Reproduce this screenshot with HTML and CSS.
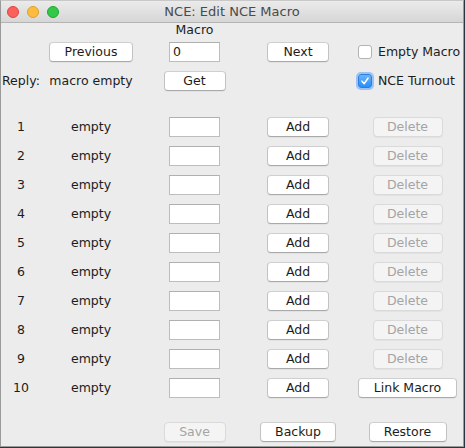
FILE: index.html
```html
<!DOCTYPE html>
<html>
<head>
<meta charset="utf-8">
<link rel="stylesheet" href="styles.css">
</head>
<body>
<div class="window">
  <div class="titlebar">
    <div class="lights">
      <span class="light red"></span>
      <span class="light yellow"></span>
      <span class="light green"></span>
    </div>
    <div class="title">NCE: Edit NCE Macro</div>
  </div>
  <div class="content">
    <div class="grid top">
      <div class="c3 r1 label">Macro</div>
      <button class="btn c2 r2 w-prev">Previous</button>
      <div class="c3 r2"><div class="field num">0</div></div>
      <button class="btn c4 r2 w-62">Next</button>
      <label class="check c5 r2"><span class="box"></span><span>Empty Macro</span></label>
      <div class="c1 r3 reply">Reply:</div>
      <div class="c2 r3">macro empty</div>
      <button class="btn c3 r3 w-62">Get</button>
      <label class="check c5 r3"><span class="box checked"><svg width="10" height="10" viewBox="0 0 10 10"><path d="M2 5.2 L4.2 7.6 L8 2.2" fill="none" stroke="#fff" stroke-width="1.6" stroke-linecap="round" stroke-linejoin="round"/></svg></span><span>NCE Turnout</span></label>
    </div>

    <div class="grid list">
      <div class="c1">1</div><div class="c2">empty</div><div class="c3"><div class="field"></div></div><button class="btn c4 w-62">Add</button><button class="btn c5 w-del" disabled>Delete</button>
      <div class="c1">2</div><div class="c2">empty</div><div class="c3"><div class="field"></div></div><button class="btn c4 w-62">Add</button><button class="btn c5 w-del" disabled>Delete</button>
      <div class="c1">3</div><div class="c2">empty</div><div class="c3"><div class="field"></div></div><button class="btn c4 w-62">Add</button><button class="btn c5 w-del" disabled>Delete</button>
      <div class="c1">4</div><div class="c2">empty</div><div class="c3"><div class="field"></div></div><button class="btn c4 w-62">Add</button><button class="btn c5 w-del" disabled>Delete</button>
      <div class="c1">5</div><div class="c2">empty</div><div class="c3"><div class="field"></div></div><button class="btn c4 w-62">Add</button><button class="btn c5 w-del" disabled>Delete</button>
      <div class="c1">6</div><div class="c2">empty</div><div class="c3"><div class="field"></div></div><button class="btn c4 w-62">Add</button><button class="btn c5 w-del" disabled>Delete</button>
      <div class="c1">7</div><div class="c2">empty</div><div class="c3"><div class="field"></div></div><button class="btn c4 w-62">Add</button><button class="btn c5 w-del" disabled>Delete</button>
      <div class="c1">8</div><div class="c2">empty</div><div class="c3"><div class="field"></div></div><button class="btn c4 w-62">Add</button><button class="btn c5 w-del" disabled>Delete</button>
      <div class="c1">9</div><div class="c2">empty</div><div class="c3"><div class="field"></div></div><button class="btn c4 w-62">Add</button><button class="btn c5 w-del" disabled>Delete</button>
      <div class="c1">10</div><div class="c2">empty</div><div class="c3"><div class="field"></div></div><button class="btn c4 w-62">Add</button><button class="btn c5 w-link">Link Macro</button>
    </div>

    <div class="grid bottom">
      <button class="btn c3 w-62" disabled>Save</button>
      <button class="btn c4 w-backup">Backup</button>
      <button class="btn c5 w-restore">Restore</button>
    </div>
  </div>
</div>
</body>
</html>
```

FILE: styles.css
```css
html, body {
  margin: 0;
  padding: 0;
}
body {
  width: 465px;
  height: 448px;
  background: #2a3640;
  overflow: hidden;
  font-family: "DejaVu Sans", sans-serif;
  font-size: 12.5px;
  color: #1c1c1c;
}
.window {
  width: 462px;
  height: 445px;
  border: 1px solid #9a9a9a;
  border-top-color: #c8c8c8;
  background: #ececec;
  overflow: hidden;
  display: flex;
  flex-direction: column;
}
.titlebar {
  height: 21px;
  flex: none;
  background: linear-gradient(#ebebeb, #d6d6d6);
  border-bottom: 1px solid #b4b4b4;
  display: flex;
  align-items: center;
  position: relative;
}
.lights {
  display: flex;
  gap: 8px;
  padding-left: 6px;
}
.light {
  width: 12px;
  height: 12px;
  border-radius: 50%;
  box-sizing: border-box;
}
.red { background: #fc605c; border: 1px solid #e0443e; }
.yellow { background: #fdbc40; border: 1px solid #dea123; }
.green { background: #34c84a; border: 1px solid #1aab29; }
.title {
  position: absolute;
  left: 0;
  right: 0;
  top: 0;
  line-height: 21px;
  text-align: center;
  font-size: 13px;
  color: #4a4a4a;
}
.content {
  flex: 1;
}
.grid {
  display: grid;
  grid-template-columns: 40px 100px 107px 100px 119px;
  align-items: center;
  justify-items: center;
}
.c1 { grid-column: 1; }
.c2 { grid-column: 2; }
.c3 { grid-column: 3; }
.c4 { grid-column: 4; }
.c5 { grid-column: 5; }
.r1 { grid-row: 1; }
.r2 { grid-row: 2; }
.r3 { grid-row: 3; }
.top {
  grid-template-rows: 14px 29px 29px;
}
.label {
  line-height: 14px;
}
.reply {
  justify-self: start;
  padding-left: 1px;
}
.list {
  grid-auto-rows: 29px;
  margin-top: 17px;
}
.bottom {
  grid-template-rows: 29px;
  margin-top: 15px;
}
.btn {
  height: 20px;
  box-sizing: border-box;
  padding: 0;
  font-family: inherit;
  font-size: 12.5px;
  color: #1c1c1c;
  background: #ffffff;
  border: 1px solid #c2c2c2;
  border-bottom-color: #a9a9a9;
  border-top-color: #cfcfcf;
  border-radius: 4px;
  box-shadow: 0 1px 0 rgba(0, 0, 0, 0.04);
  line-height: 18px;
}
.btn:disabled {
  background: #f4f4f4;
  border-color: #dadada;
  color: #a4a4a4;
}
.w-prev { width: 84px; }
.w-62 { width: 62px; }
.w-del { width: 70px; }
.w-link { width: 99px; }
.w-backup { width: 76px; }
.w-restore { width: 78px; }
.field {
  width: 51px;
  height: 20px;
  box-sizing: border-box;
  background: #fff;
  border: 1px solid #bdbdbd;
  border-top-color: #b0b0b0;
  line-height: 18px;
  padding-left: 3px;
}
.check {
  justify-self: start;
  margin-left: 10px;
  display: flex;
  align-items: center;
  gap: 6px;
  white-space: nowrap;
}
.box {
  width: 14px;
  height: 14px;
  box-sizing: border-box;
  background: #fff;
  border: 1px solid #b3b3b3;
  border-radius: 3px;
  display: flex;
  align-items: center;
  justify-content: center;
}
.box.checked {
  background: linear-gradient(#6cb3fa, #2a8ef9);
  border-color: #2a7fe0;
  box-shadow: 0 0 0 2px rgba(90, 160, 250, 0.55);
}
```
